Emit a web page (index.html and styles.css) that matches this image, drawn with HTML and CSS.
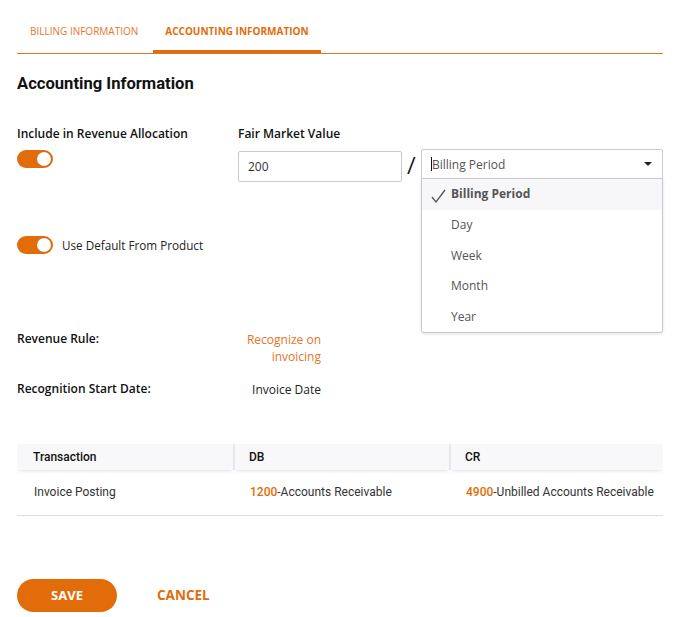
FILE: index.html
```html
<!DOCTYPE html>
<html lang="en">
  <head>
    <meta charset="UTF-8" />
    <meta name="viewport" content="width=device-width, initial-scale=1.0" />
    <title>Accounting Information</title>
    <link rel="stylesheet" href="styles.css">
  </head>
  <body>
    <div class="page">
      <!-- tabs -->
      <div class="tabs">
        <a class="tab" href="javascript:;">BILLING INFORMATION</a>
        <a class="tab active" href="javascript:;">ACCOUNTING INFORMATION</a>
      </div>

      <h2 class="title">Accounting Information</h2>

      <div class="row">
        <div class="col-left">
          <div class="label">Include in Revenue Allocation</div>
          <span class="toggle on"></span>
        </div>
        <div class="col-fmv">
          <div class="label">Fair Market Value</div>
          <div class="fmv">
            <input class="input" type="text" value="200" />
            <span class="slash">/</span>
            <div class="select">
              <div class="select-box">
                <span class="caret"></span>Billing Period
                <span class="arrow"></span>
              </div>
              <ul class="menu">
                <li class="selected">
                  <svg class="check" width="15" height="14" viewBox="0 0 15 14">
                    <polyline points="1,8 5,13 14,1" fill="none" stroke="#555" stroke-width="1.3" />
                  </svg>Billing Period
                </li>
                <li>Day</li>
                <li>Week</li>
                <li>Month</li>
                <li>Year</li>
              </ul>
            </div>
          </div>
        </div>
      </div>

      <div class="default-row">
        <span class="toggle on"></span>
        <span class="toggle-text">Use Default From Product</span>
      </div>

      <div class="info">
        <div class="info-row">
          <span class="label">Revenue Rule:</span>
          <span class="value orange">Recognize on<br />invoicing</span>
        </div>
        <div class="info-row">
          <span class="label">Recognition Start Date:</span>
          <span class="value">Invoice Date</span>
        </div>
      </div>

      <table class="grid">
        <thead>
          <tr>
            <th class="col-tx">Transaction</th>
            <th class="col-db">DB</th>
            <th>CR</th>
          </tr>
        </thead>
        <tbody>
          <tr>
            <td>Invoice Posting</td>
            <td><span class="orange">1200</span>-Accounts Receivable</td>
            <td><span class="orange">4900</span>-Unbilled Accounts Receivable</td>
          </tr>
        </tbody>
      </table>

      <div class="actions">
        <a class="btn-save" href="javascript:;">SAVE</a>
        <a class="btn-cancel" href="javascript:;">CANCEL</a>
      </div>
    </div>
  </body>
</html>
```

FILE: styles.css
```css
* {
  margin: 0;
  padding: 0;
  box-sizing: border-box;
}

body {
  font-family: "Open Sans", "Noto Sans", sans-serif;
  color: #222;
  background: #fff;
}

ul {
  list-style: none;
}

a {
  text-decoration: none;
}

.page {
  width: 646px;
  margin-left: 17px;
  padding-top: 15px;
}

.orange {
  color: #e36c0a;
}

/* tabs */
.tabs {
  display: flex;
  border-bottom: 1px solid #d9782a;
  height: 39px;
}

.tab {
  font-size: 10px;
  color: #e5762a;
  padding: 9px 15px 0 13px;
  height: 38px;
}

.tab.active {
  font-weight: 700;
  color: #e36c0a;
  border-bottom: 3px solid #e36c0a;
  padding: 9px 12px 0 12px;
}

.title {
  font-family: Roboto, sans-serif;
  font-size: 16.6px;
  font-weight: 700;
  color: #111;
  margin-top: 20px;
  line-height: 20px;
}

.label {
  font-size: 12px;
  font-weight: 600;
  color: #111;
  line-height: 16px;
}

.row {
  display: flex;
  margin-top: 32px;
}

.col-left {
  width: 221px;
}

.col-left .toggle {
  margin-top: 8px;
}

.col-fmv {
  flex: 1;
}

.fmv {
  display: flex;
  align-items: flex-start;
  margin-top: 7px;
}

.input {
  width: 164px;
  height: 31px;
  border: 1px solid #c9c9cf;
  border-radius: 2px;
  padding: 0 9px;
  font-family: "Open Sans", sans-serif;
  font-size: 12px;
  color: #333;
  margin-top: 2px;
}

.slash {
  font-family: Roboto, sans-serif;
  font-size: 22px;
  width: 19px;
  text-align: center;
  line-height: 28px;
  margin-top: 3px;
  color: #111;
}

.select {
  position: relative;
  width: 242px;
}

.select-box {
  height: 30px;
  border: 1px solid #c9c9cf;
  border-radius: 2px 2px 0 0;
  padding: 0 9px;
  font-size: 12px;
  color: #555;
  display: flex;
  align-items: center;
}

.caret {
  width: 1px;
  height: 14px;
  background: #111;
}

.arrow {
  margin-left: auto;
  border-left: 4px solid transparent;
  border-right: 4px solid transparent;
  border-top: 4px solid #222;
  margin-right: 1px;
}

.menu {
  position: absolute;
  top: 29px;
  left: 0;
  right: 0;
  background: #fff;
  border: 1px solid #c9c9cf;
  border-radius: 0 0 3px 3px;
  box-shadow: 0 1px 3px rgba(0, 0, 0, 0.12);
  z-index: 2;
}

.menu li {
  height: 30.5px;
  line-height: 30.5px;
  padding-left: 29px;
  font-size: 12px;
  color: #555;
}

.menu li.selected {
  display: flex;
  align-items: center;
  background: #f7f7f9;
  font-weight: 700;
  padding-left: 9px;
  height: 31px;
}

.check {
  margin-right: 5px;
  margin-top: 2px;
}

.default-row {
  display: flex;
  align-items: center;
  margin-top: 54px;
}

.toggle {
  display: inline-block;
  position: relative;
  width: 36px;
  height: 18px;
  border-radius: 9px;
  background: #e36c0a;
}

.toggle.on::after {
  content: "";
  position: absolute;
  right: 2px;
  top: 2px;
  width: 14px;
  height: 14px;
  border-radius: 50%;
  background: #fff;
  box-shadow: 0 0 1px rgba(0, 0, 0, 0.3);
}

.toggle-text {
  font-size: 11.7px;
  color: #222;
  margin-left: 9px;
}

.info {
  width: 304px;
  margin-top: 77px;
}

.info-row {
  display: flex;
  justify-content: space-between;
  align-items: flex-start;
  font-size: 12px;
  line-height: 17px;
  margin-bottom: 16px;
}

.info-row .value {
  text-align: right;
  color: #222;
}

.info-row .value.orange {
  color: #e5762a;
}

.grid {
  width: 100%;
  table-layout: fixed;
  border-collapse: collapse;
  margin-top: 46px;
  font-family: Roboto, sans-serif;
  font-size: 12px;
}

.grid th {
  background: #f8f8fa;
  text-align: left;
  font-weight: 500;
  color: #111;
  height: 26px;
  padding: 0 0 0 14px;
  border-left: 2px solid #e6e6ec;
  box-shadow: 0 3px 3px -2px rgba(0, 0, 0, 0.12);
}

.grid th:first-child {
  border-left: none;
  padding-left: 16px;
}

.grid .col-tx {
  width: 217px;
}

.grid .col-db {
  width: 216px;
}

.grid td {
  height: 45px;
  padding: 0 0 0 16px;
  color: #333;
  white-space: nowrap;
  border-bottom: 1px solid #dedee2;
}

.grid td:first-child {
  padding-left: 17px;
}

.grid td .orange {
  font-weight: 500;
}

.actions {
  display: flex;
  align-items: center;
  margin-top: 63px;
}

.btn-save {
  width: 100px;
  height: 33px;
  line-height: 33px;
  border-radius: 17px;
  background: #e36c0a;
  color: #fff;
  font-weight: 700;
  font-size: 13px;
  text-align: center;
}

.btn-cancel {
  color: #e36c0a;
  font-weight: 700;
  font-size: 13.5px;
  margin-left: 40px;
}
```
